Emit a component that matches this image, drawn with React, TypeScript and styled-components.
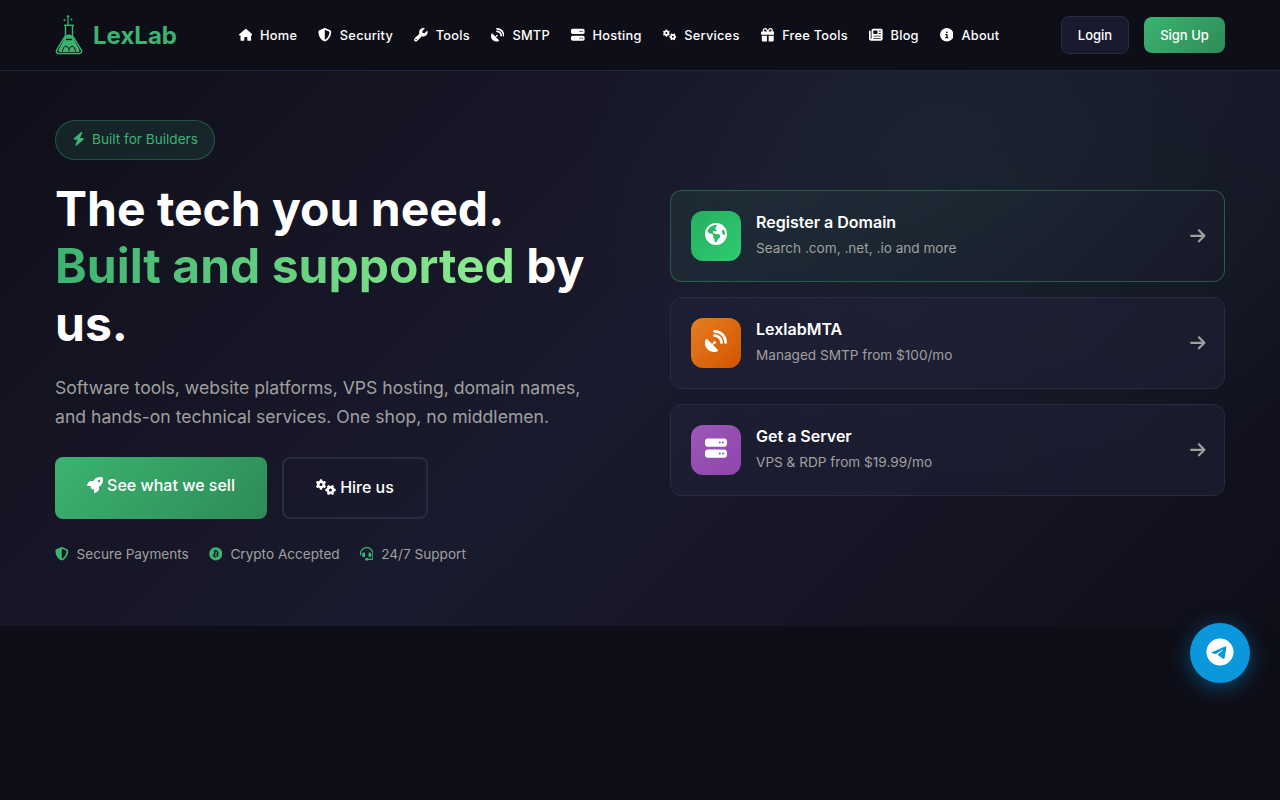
import React from 'react';
import styled, { createGlobalStyle } from 'styled-components';
import {
  FaArrowRight, FaBitcoin, FaBolt, FaCircleInfo, FaEarthAmericas, FaGears, FaGift, FaHeadset,
  FaHouse, FaNewspaper, FaRocket, FaSatelliteDish, FaServer, FaShieldHalved, FaTelegram, FaWrench,
} from 'react-icons/fa6';

const GlobalStyle = createGlobalStyle`
  * { box-sizing: border-box; }
  html, body { margin: 0; padding: 0; background: #0e0e18; }
  body { font-family: Inter, "Liberation Sans", sans-serif; min-height: 800px; }
`;

const Header = styled.header`
  height: 71px;
  background: #0e0e18;
  border-bottom: 1px solid #23233a;
  padding: 0 55px;
  display: flex;
  align-items: center;
  justify-content: space-between;
`;

const Brand = styled.a`
  display: flex;
  align-items: center;
  gap: 10px;
  color: #3cb371;
  font-size: 24px;
  font-weight: 700;
`;

const NavList = styled.nav`
  display: flex;
  align-items: center;
  gap: 21px;
`;

const NavLink = styled.a`
  display: flex;
  align-items: center;
  gap: 8px;
  color: #fff;
  font-size: 12.8px;
  font-weight: 500;
  letter-spacing: 0.25px;
  svg { width: auto; height: 13.6px; }
`;

const AuthGroup = styled.div`
  display: flex;
  align-items: center;
  gap: 15px;
`;

const LoginButton = styled.a`
  width: 68px;
  height: 38px;
  border: 1px solid #2a2a40;
  border-radius: 8px;
  background: #1a1a2e;
  color: #fff;
  font-size: 13px;
  font-weight: 500;
  display: flex;
  align-items: center;
  justify-content: center;
`;

const SignUpButton = styled.a`
  width: 81px;
  height: 36px;
  border-radius: 8px;
  background: linear-gradient(135deg, #3cb371, #2e8b57);
  color: #fff;
  font-size: 13px;
  font-weight: 500;
  display: flex;
  align-items: center;
  justify-content: center;
`;

const Hero = styled.section`
  height: 555px;
  padding: 49px 55px 0;
  background:
    radial-gradient(ellipse 420px 300px at 1000px 110px, rgba(60, 179, 113, 0.07), transparent 100%),
    linear-gradient(135deg, #0f0f1a 0%, #1a1a2e 50%, #0f0f1a 100%);
  display: grid;
  grid-template-columns: 555px 555px;
  gap: 60px;
  align-items: start;
`;

const LeftColumn = styled.div`
  display: flex;
  flex-direction: column;
  align-items: flex-start;
`;

const Pill = styled.div`
  height: 40px;
  width: 160px;
  padding: 0 0 2px 16px;
  border: 1px solid rgba(60, 179, 113, 0.35);
  border-radius: 20px;
  background: rgba(60, 179, 113, 0.12);
  color: #3cb371;
  font-size: 13.6px;
  display: flex;
  align-items: center;
  gap: 6.5px;
  svg { width: auto; height: 13.6px; }
`;

const Title = styled.h1`
  margin: 19.5px 0 0;
  font-size: 48px;
  line-height: 57.6px;
  font-weight: 700;
  color: #fff;
`;

const Accent = styled.span`
  background: linear-gradient(90deg, #3cb371, #90ee90);
  -webkit-background-clip: text;
  background-clip: text;
  color: transparent;
`;

const Lead = styled.p`
  margin: 20.5px 0 0;
  font-size: 17.6px;
  line-height: 29px;
  color: #a0a0a0;
`;

const Actions = styled.div`
  display: flex;
  gap: 15px;
  margin-top: 26px;
`;

const PrimaryAction = styled.a`
  width: 212px;
  height: 62px;
  border-radius: 8px;
  background: linear-gradient(135deg, #3cb371, #2e8b57);
  color: #fff;
  font-size: 16px;
  font-weight: 500;
  display: flex;
  align-items: center;
  justify-content: center;
  gap: 4px;
  padding-bottom: 6px;
  svg { font-size: 16px; }
`;

const SecondaryAction = styled.a`
  width: 146px;
  height: 62px;
  padding-bottom: 2px;
  border: 2px solid #2a2a40;
  border-radius: 8px;
  color: #fff;
  font-size: 16px;
  font-weight: 500;
  display: flex;
  align-items: center;
  justify-content: center;
  gap: 4px;
  svg { font-size: 20px; }
`;

const TrustRow = styled.div`
  display: flex;
  gap: 20px;
  margin-top: 26px;
`;

const TrustItem = styled.span`
  display: flex;
  align-items: center;
  gap: 8px;
  color: #a0a0a0;
  font-size: 13.6px;
  line-height: 18px;
  svg { color: #3cb371; font-size: 13.6px; }
`;

const CardStack = styled.div`
  display: flex;
  flex-direction: column;
  gap: 15px;
  margin-top: 70px;
`;

const Card = styled.a<{ $featured?: boolean }>`
  height: 92px;
  padding: 0 20px;
  border: 1px solid ${p => (p.$featured ? 'rgba(60, 179, 113, 0.4)' : '#2a2a40')};
  border-radius: 12px;
  background: ${p =>
    p.$featured
      ? 'linear-gradient(135deg, rgba(60, 179, 113, 0.1), rgba(26, 26, 46, 0.6))'
      : 'rgba(34, 34, 58, 0.5)'};
  display: flex;
  align-items: center;
  gap: 15px;
`;

const CardIcon = styled.div<{ $bg: string }>`
  width: 50px;
  height: 50px;
  padding-bottom: 4px;
  border-radius: 12px;
  background: ${p => p.$bg};
  color: #fff;
  font-size: 22px;
  display: flex;
  align-items: center;
  justify-content: center;
  flex-shrink: 0;
`;

const CardBody = styled.div`
  flex: 1;
  padding-bottom: 4px;
`;

const CardTitle = styled.div`
  color: #fff;
  font-size: 16px;
  font-weight: 600;
  line-height: 24px;
`;

const CardText = styled.div`
  margin-top: 3px;
  color: #a0a0a0;
  font-size: 13.6px;
  line-height: 22px;
`;

const CardArrow = styled.span`
  margin-right: -3px;
  color: #a0a0a0;
  font-size: 17.6px;
  display: flex;
`;

const TelegramButton = styled.a`
  position: fixed;
  left: 1190px;
  top: 623px;
  width: 60px;
  height: 60px;
  padding-bottom: 2px;
  border-radius: 50%;
  background: #0a97dc;
  box-shadow: 0 4px 20px rgba(0, 136, 204, 0.5);
  color: #fff;
  font-size: 28px;
  display: flex;
  align-items: center;
  justify-content: center;
`;

const FlaskLogo = () => (
  <svg width="28" height="40" viewBox="0 0 28 40" fill="none">
    <g fill="#3cb371">
      <circle cx="13" cy="1.5" r="1.3" />
      <circle cx="9.500" cy="5" r="1" />
      <circle cx="16.500" cy="4.500" r="1" />
      <rect x="12.400" y="3" width="1.200" height="7" />
      <rect x="9" y="9.600" width="10" height="1.400" />
    </g>
    <path
      d="M10.500 11v9.500L1.600 35.200c-.9 1.700.2 3.300 2 3.300h20.800c1.800 0 2.900-1.600 2-3.300L17.500 20.500V11"
      stroke="#3cb371"
      strokeWidth="1.400"
    />
    <path
      d="M9 24.500 3.600 34.800c-.5 1.200 0 2.200 1.200 2.200h18.400c1.200 0 1.700-1 1.200-2.200L19 24.500Z"
      fill="#3cb371"
    />
    <circle cx="14" cy="24.500" r="5" fill="#3cb371" />
    <path d="M11 24.500h6" stroke="#0e0e18" strokeWidth="1.400" />
    <path
      d="M7.500 36.500c.2-3 1.500-5 3.500-5.500l3 2.500 3-2.500c2 .5 3.300 2.500 3.500 5.500M14 33.500v3"
      stroke="#0e0e18"
      strokeWidth="1"
    />
  </svg>
);

const navItems = [
  { label: 'Home', icon: <FaHouse /> },
  { label: 'Security', icon: <FaShieldHalved /> },
  { label: 'Tools', icon: <FaWrench /> },
  { label: 'SMTP', icon: <FaSatelliteDish /> },
  { label: 'Hosting', icon: <FaServer /> },
  { label: 'Services', icon: <FaGears /> },
  { label: 'Free Tools', icon: <FaGift /> },
  { label: 'Blog', icon: <FaNewspaper /> },
  { label: 'About', icon: <FaCircleInfo /> },
];

const cards = [
  {
    title: 'Register a Domain',
    text: 'Search .com, .net, .io and more',
    icon: <FaEarthAmericas />,
    bg: 'linear-gradient(135deg, #27ae60, #2ecc71)',
    featured: true,
  },
  {
    title: 'LexlabMTA',
    text: 'Managed SMTP from $100/mo',
    icon: <FaSatelliteDish />,
    bg: 'linear-gradient(135deg, #e67e22, #d35400)',
  },
  {
    title: 'Get a Server',
    text: 'VPS & RDP from $19.99/mo',
    icon: <FaServer />,
    bg: 'linear-gradient(135deg, #9b59b6, #8e44ad)',
  },
];

const App = () => {
  return (
    <>
      <GlobalStyle />
      <Header>
        <Brand>
          <FlaskLogo />
          LexLab
        </Brand>
        <NavList>
          {navItems.map(item => (
            <NavLink key={item.label}>
              {item.icon}
              {item.label}
            </NavLink>
          ))}
        </NavList>
        <AuthGroup>
          <LoginButton>Login</LoginButton>
          <SignUpButton>Sign Up</SignUpButton>
        </AuthGroup>
      </Header>
      <Hero>
        <LeftColumn>
          <Pill>
            <FaBolt />
            Built for Builders
          </Pill>
          <Title>
            The tech you need.
            <br />
            <Accent>Built and supported</Accent> by us.
          </Title>
          <Lead>
            Software tools, website platforms, VPS hosting, domain names, and hands-on technical
            services. One shop, no middlemen.
          </Lead>
          <Actions>
            <PrimaryAction>
              <FaRocket />
              See what we sell
            </PrimaryAction>
            <SecondaryAction>
              <FaGears />
              Hire us
            </SecondaryAction>
          </Actions>
          <TrustRow>
            <TrustItem><FaShieldHalved />Secure Payments</TrustItem>
            <TrustItem><FaBitcoin />Crypto Accepted</TrustItem>
            <TrustItem><FaHeadset />24/7 Support</TrustItem>
          </TrustRow>
        </LeftColumn>
        <CardStack>
          {cards.map(card => (
            <Card key={card.title} $featured={card.featured}>
              <CardIcon $bg={card.bg}>{card.icon}</CardIcon>
              <CardBody>
                <CardTitle>{card.title}</CardTitle>
                <CardText>{card.text}</CardText>
              </CardBody>
              <CardArrow><FaArrowRight /></CardArrow>
            </Card>
          ))}
        </CardStack>
      </Hero>
      <TelegramButton><FaTelegram /></TelegramButton>
    </>
  );
};

export default App;
